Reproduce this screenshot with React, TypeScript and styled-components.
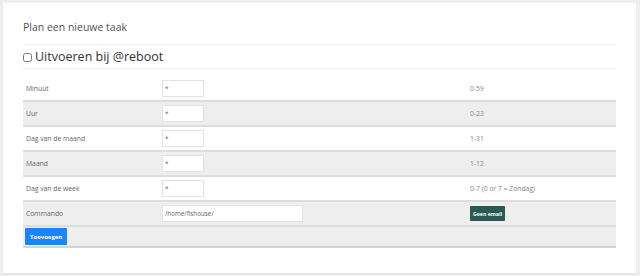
import styled, { createGlobalStyle } from 'styled-components';

const GlobalStyle = createGlobalStyle`
  html, body {
    margin: 0;
    padding: 0;
    background: #eeeeee;
    font-family: 'Open Sans', 'Liberation Sans', sans-serif;
  }
`;

const Page = styled.div`
  padding: 3px 4px 3px 3px;
  height: 276px;
  box-sizing: border-box;
`;

const Panel = styled.section`
  background: #fff;
  height: 270px;
  box-sizing: border-box;
  padding: 12px 20px 0 20px;
  box-shadow: 0 1px 1px rgba(0, 0, 0, 0.05);
`;

const Title = styled.h2`
  margin: 0;
  font-size: 10.5px;
  font-weight: 400;
  color: #555;
  line-height: 24px;
  height: 29px;
  border-bottom: 1px solid #f0f0f0;
`;

const RebootRow = styled.label`
  display: flex;
  align-items: center;
  gap: 2px;
  height: 23px;
  border-bottom: 1px solid #eeeeee;
  font-size: 12.5px;
  color: #333;
`;

const Check = styled.input`
  width: 9px;
  height: 9px;
  margin: 1px 1px 0 0;
`;

const Table = styled.table`
  margin-top: 7px;
  width: 100%;
  border-collapse: collapse;
  font-size: 6.8px;
  color: #666;
`;

const Row = styled.tr<{ $alt?: boolean; $last?: boolean }>`
  background: ${(p) => (p.$alt ? '#eeeeee' : '#fff')};
  border-bottom: 2px solid ${(p) => (p.$last ? '#d4d4d4' : '#dddddd')};
  height: ${(p) => (p.$last ? '21px' : '25px')};
`;

const Label = styled.td`
  width: 134px;
  padding: 0 0 0 3px;
`;

const Field = styled.td`
  width: 306px;
  padding: 0 0 0 2px;
`;

const Range = styled.td`
  padding: 0 0 0 2px;
  color: #888;
`;

const TextInput = styled.input<{ $wide?: boolean }>`
  box-sizing: border-box;
  width: ${(p) => (p.$wide ? '141px' : '42px')};
  height: 17px;
  border: 1px solid #e2e2e2;
  background: #fff;
  padding: 0 3px 0 2px;
  font-family: inherit;
  font-size: 6.3px;
  color: #666;
  display: block;
`;

const SmallButton = styled.button<{ $variant: 'blue' | 'teal' }>`
  border: 0;
  border-radius: 1px;
  color: #fff;
  font-family: inherit;
  font-weight: 700;
  cursor: pointer;
  display: block;
  font-size: ${(p) => (p.$variant === 'blue' ? '6px' : '5.2px')};
  padding: ${(p) => (p.$variant === 'blue' ? '0 5px' : '0 3px')};
  height: ${(p) => (p.$variant === 'blue' ? '17px' : '15px')};
  background: ${(p) => (p.$variant === 'blue' ? '#1a85ff' : '#285a52')};
`;

const fields = [
  { label: 'Minuut', range: '0-59' },
  { label: 'Uur', range: '0-23' },
  { label: 'Dag van de maand', range: '1-31' },
  { label: 'Maand', range: '1-12' },
  { label: 'Dag van de week', range: '0-7 (0 or 7 = Zondag)' },
];

const App = () => {
  return (
    <Page>
      <GlobalStyle />
      <Panel>
        <Title>Plan een nieuwe taak</Title>
        <RebootRow>
          <Check type="checkbox" />
          Uitvoeren bij @reboot
        </RebootRow>
        <Table>
          <tbody>
            {fields.map((f, i) => (
              <Row key={f.label} $alt={i % 2 === 1}>
                <Label>{f.label}</Label>
                <Field>
                  <TextInput defaultValue="*" />
                </Field>
                <Range>{f.range}</Range>
              </Row>
            ))}
            <Row $alt>
              <Label>Commando</Label>
              <Field>
                <TextInput $wide defaultValue="/home/fishouse/" />
              </Field>
              <Range>
                <SmallButton $variant="teal">Geen email</SmallButton>
              </Range>
            </Row>
            <Row $alt $last>
              <td colSpan={3} style={{ padding: '0 0 0 2px' }}>
                <SmallButton $variant="blue">Toevoegen</SmallButton>
              </td>
            </Row>
          </tbody>
        </Table>
      </Panel>
    </Page>
  );
};

export default App;
